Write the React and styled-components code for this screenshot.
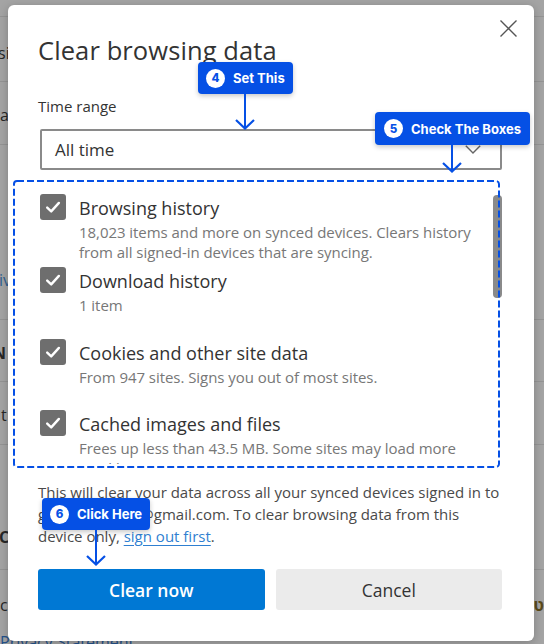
import React from "react";
import styled, { createGlobalStyle } from "styled-components";

const Global = createGlobalStyle`
  html, body { margin: 0; padding: 0; }
  body { background: #a4a4a4; overflow: hidden; font-family: "Open Sans", "Noto Sans", sans-serif; }
  *, *::before, *::after { box-sizing: border-box; }
`;

const BLUE = "#0550e5";

const Page = styled.div`
  position: relative;
  width: 544px;
  height: 644px;
  overflow: hidden;
  background: #a4a4a4;
`;

/* dimmed settings page behind the dialog */
const BgList = styled.div`
  display: flex;
  flex-direction: column;
`;

const BgRow = styled.div`
  height: ${(p) => p.$h}px;
  padding-top: ${(p) => p.$pt || 0}px;
  border-bottom: 1px solid ${(p) => (p.$line ? "#949494" : "transparent")};
  display: flex;
  justify-content: space-between;
  align-items: flex-start;
`;

const BgText = styled.span`
  display: block;
  line-height: 20px;
  font-size: 16px;
  font-weight: ${(p) => (p.$bold ? 700 : 400)};
  color: ${(p) => p.$color || "#262626"};
  margin-left: ${(p) => p.$shift || 0}px;
  white-space: nowrap;
`;

const Dialog = styled.div`
  position: absolute;
  left: 8px;
  top: 5px;
  width: 526px;
  height: 636px;
  background: #fff;
  border-radius: 6px;
  box-shadow: 0 2px 10px rgba(0, 0, 0, 0.22);
  padding: 29px 32px 31px 30px;
  display: flex;
  flex-direction: column;
`;

const CloseButton = styled.button`
  position: absolute;
  top: 14px;
  right: 16px;
  width: 19px;
  height: 19px;
  padding: 0;
  border: none;
  background: none;
  display: flex;
`;

const Title = styled.h1`
  margin: 0;
  font-size: 25.5px;
  line-height: 32px;
  font-weight: 500;
  color: #333;
  letter-spacing: 0.1px;
`;

const FieldLabel = styled.div`
  margin-top: 30px;
  font-size: 15px;
  line-height: 20px;
  color: #333;
`;

const Select = styled.div`
  margin: 13px 0 0 2px;
  height: 41px;
  border: 2px solid #8a8a8a;
  border-radius: 2px;
  display: flex;
  align-items: center;
  justify-content: space-between;
  padding: 0 19px 0 13px;
  font-size: 17px;
  color: #333;
`;

const ScrollArea = styled.div`
  position: relative;
  margin-top: 20px;
  height: 274px;
  overflow: hidden;
  padding: 6px 14px 0 2px;
`;

const Thumb = styled.div`
  position: absolute;
  right: 0;
  top: 5px;
  width: 9px;
  height: 103px;
  border-radius: 4px;
  background: #8a8a8a;
`;

const Item = styled.div`
  display: flex;
  align-items: flex-start;
  gap: 13px;
  min-height: 71.5px;
  padding-bottom: 7px;
`;

const Box = styled.div`
  flex: none;
  width: 26px;
  height: 26px;
  margin-top: -2px;
  border-radius: 3px;
  background: #6e6e6e;
  display: flex;
  align-items: center;
  justify-content: center;
`;

const ItemText = styled.div`
  display: flex;
  flex-direction: column;
`;

const ItemLabel = styled.div`
  font-size: 18px;
  line-height: 24px;
  font-weight: 500;
  color: #333;
`;

const ItemDesc = styled.div`
  margin-top: 2px;
  font-size: 15px;
  line-height: 20px;
  color: #777;
  letter-spacing: -0.05px;
  white-space: nowrap;
  & + & { margin-top: 0; }
`;

const Notice = styled.p`
  margin: 16.5px 0 0;
  font-size: 15px;
  line-height: 22px;
  color: #4a4a4a;
  white-space: nowrap;
`;

const Link = styled.a`
  color: #2f7fd1;
  text-decoration: underline;
  text-underline-offset: 3px;
`;

const Buttons = styled.div`
  margin-top: 22.5px;
  display: grid;
  grid-template-columns: 1fr 1fr;
  gap: 11px;
`;

const Button = styled.button`
  height: 41px;
  border: none;
  border-radius: 3px;
  font-family: inherit;
  font-size: 17.5px;
  font-weight: ${(p) => (p.$primary ? 600 : 400)};
  color: ${(p) => (p.$primary ? "#fff" : "#333")};
  background: ${(p) => (p.$primary ? "#0078d4" : "#ebebeb")};
`;

/* annotation overlays */
const DashedFrame = styled.svg`
  position: absolute;
  left: 13px;
  top: 180px;
  overflow: visible;
`;

const Callout = styled.div`
  position: absolute;
  left: ${(p) => p.$x}px;
  top: ${(p) => p.$y}px;
  display: flex;
  flex-direction: column;
  align-items: center;
`;

const CalloutBox = styled.div`
  height: ${(p) => p.$h || 32}px;
  display: flex;
  align-items: center;
  gap: 8px;
  padding: 0 ${(p) => p.$pr || 8}px 0 ${(p) => p.$pl || 8}px;
  background: ${BLUE};
  border-radius: 4px;
  box-shadow: 0 2px 5px rgba(0, 0, 0, 0.22);
  color: #fff;
  font-family: Inter, "Noto Sans", sans-serif;
  font-weight: 700;
  font-size: 13px;
  white-space: nowrap;
`;

const Badge = styled.span`
  width: 19px;
  height: 19px;
  border-radius: 50%;
  background: #fff;
  color: ${BLUE};
  font-size: 11.5px;
  font-weight: 800;
  display: flex;
  align-items: center;
  justify-content: center;
`;

const Arrow = ({ len }) => (
  <svg width="22" height={len} viewBox={`0 0 22 ${len}`} style={{ display: "block" }}>
    <line x1="11" y1="0" x2="11" y2={len - 1} stroke={BLUE} strokeWidth="2" />
    <polyline
      points={`2,${len - 10} 11,${len - 1.5} 20,${len - 10}`}
      fill="none"
      stroke={BLUE}
      strokeWidth="2.2"
    />
  </svg>
);

const Check = () => (
  <svg width="18" height="18" viewBox="0 0 18 18">
    <path d="M3.2 9.6 L7.2 13.4 L14.9 4.9" fill="none" stroke="#fff" strokeWidth="2.4" strokeLinecap="round" strokeLinejoin="round" />
  </svg>
);

const items = [
  {
    label: "Browsing history",
    desc: ["18,023 items and more on synced devices. Clears history", "from all signed-in devices that are syncing."],
  },
  { label: "Download history", desc: ["1 item"] },
  { label: "Cookies and other site data", desc: ["From 947 sites. Signs you out of most sites."] },
  { label: "Cached images and files", desc: ["Frees up less than 43.5 MB. Some sites may load more", "quickly on your next visit."] },
  { label: "Passwords", desc: ["None"] },
];

const bgRows = [
  { h: 17, line: true },
  { h: 65, pt: 26, line: true, l: "si", ls: -2 },
  { h: 63, pt: 23, line: true, l: "a", ls: 0 },
  { h: 175, pt: 125, line: true, l: "iv", ls: -1, lc: "#2f5f8f" },
  { h: 62, pt: 23, line: true, l: "N", ls: -7, lb: true },
  { h: 63, pt: 23, line: true, l: "t", ls: 1 },
  { h: 63, line: false },
  { h: 62, pt: 19, line: true, l: "C", ls: -1, lb: true },
  { h: 60, pt: 25, line: false, l: "c", ls: 0, r: "ט" },
  { h: 40, pt: 2, l: "Privacy Statement", ls: 0, lc: "#24518a" },
];

export default function App() {
  return (
    <Page>
      <Global />
      <BgList>
        {bgRows.map((r, i) => (
          <BgRow key={i} $h={r.h} $pt={r.pt} $line={r.line}>
            <BgText $shift={r.ls} $bold={r.lb} $color={r.lc}>{r.l || ""}</BgText>
            <BgText $color="#5a4a1a" $bold>{r.r || ""}</BgText>
          </BgRow>
        ))}
      </BgList>

      <Dialog>
        <CloseButton aria-label="Close">
          <svg width="19" height="19" viewBox="0 0 19 19">
            <path d="M1.5 1.5 L17.5 17.5 M17.5 1.5 L1.5 17.5" stroke="#555" strokeWidth="1.4" fill="none" />
          </svg>
        </CloseButton>
        <Title>Clear browsing data</Title>
        <FieldLabel>Time range</FieldLabel>
        <Select>
          <span>All time</span>
          <svg width="16" height="9" viewBox="0 0 16 9">
            <path d="M0.8 0.8 L8 8 L15.2 0.8" fill="none" stroke="#666" strokeWidth="1.4" />
          </svg>
        </Select>
        <ScrollArea>
          {items.map((it) => (
            <Item key={it.label}>
              <Box>
                <Check />
              </Box>
              <ItemText>
                <ItemLabel>{it.label}</ItemLabel>
                {it.desc.map((d) => (
                  <ItemDesc key={d}>{d}</ItemDesc>
                ))}
              </ItemText>
            </Item>
          ))}
          <Thumb />
        </ScrollArea>
        <Notice>
          This will clear your data across all your synced devices signed in to
          <br />
          gxxxxxxxxxxxx@gmail.com. To clear browsing data from this
          <br />
          device only, <Link>sign out first</Link>.
        </Notice>
        <Buttons>
          <Button $primary>Clear now</Button>
          <Button>Cancel</Button>
        </Buttons>
      </Dialog>

      <DashedFrame width="487" height="288">
        <rect x="1" y="1" width="485" height="286" rx="3" fill="none" stroke={BLUE} strokeWidth="2" strokeDasharray="7 3" />
      </DashedFrame>

      <Callout $x={198} $y={62}>
        <CalloutBox>
          <Badge>4</Badge>
          Set This
        </CalloutBox>
        <Arrow len={36} />
      </Callout>

      <Callout $x={375} $y={112}>
        <CalloutBox $h={33} $pl={9} $pr={9}>
          <Badge>5</Badge>
          Check The Boxes
        </CalloutBox>
        <Arrow len={28} />
      </Callout>

      <Callout $x={42} $y={498}>
        <CalloutBox>
          <Badge>6</Badge>
          Click Here
        </CalloutBox>
        <Arrow len={36} />
      </Callout>
    </Page>
  );
}
